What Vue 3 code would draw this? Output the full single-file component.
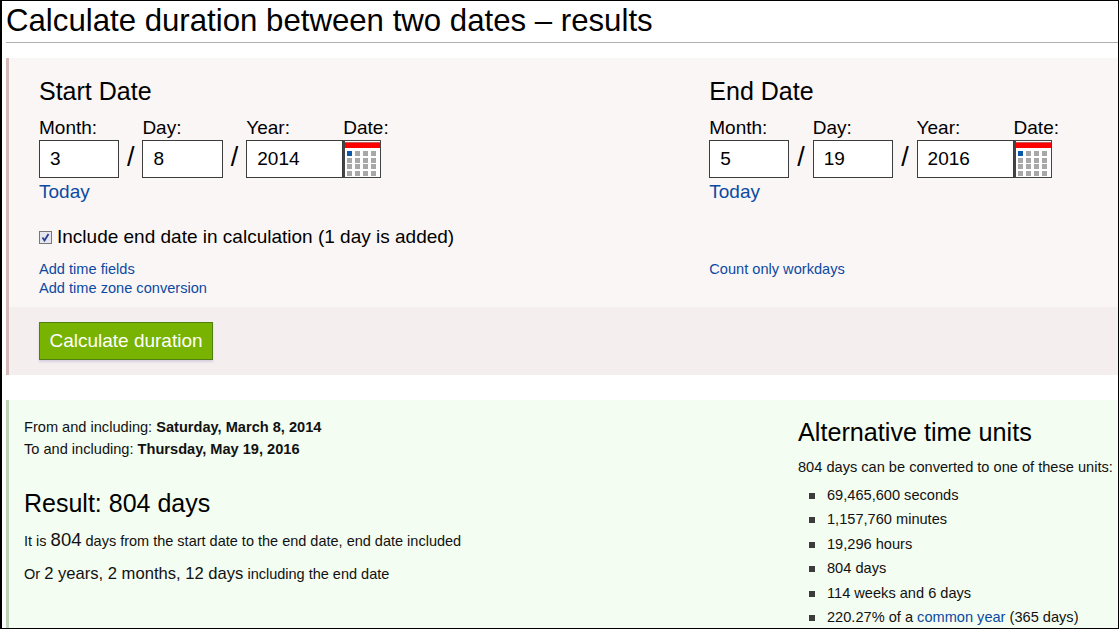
<script setup>
const panels = [
  { title: 'Start Date', month: '3', day: '8', year: '2014', showInclude: true, links: ['Add time fields', 'Add time zone conversion'] },
  { title: 'End Date', month: '5', day: '19', year: '2016', showInclude: false, links: ['Count only workdays'] },
]
const units = ['69,465,600 seconds', '1,157,760 minutes', '19,296 hours', '804 days', '114 weeks and 6 days']
const cells = Array.from({ length: 16 }, (_, i) => i)
</script>

<template>
  <div class="frame">
    <h1 class="title">Calculate duration between two dates – results</h1>
    <form class="form-panel" @submit.prevent>
      <div class="columns">
        <section v-for="p in panels" :key="p.title" class="col">
          <h2 class="date-title">{{ p.title }}</h2>
          <div class="fields">
            <label class="field f-month"><span>Month:</span><input class="box" :value="p.month" /></label>
            <span class="slash">/</span>
            <label class="field f-day"><span>Day:</span><input class="box" :value="p.day" /></label>
            <span class="slash">/</span>
            <label class="field f-year"><span>Year:</span><input class="box" :value="p.year" /></label>
            <div class="field f-date">
              <span>Date:</span>
              <div class="cal">
                <div class="cal-top"></div>
                <div class="cal-grid"><i v-for="c in cells" :key="c" :class="{ on: c === 0 }"></i></div>
              </div>
            </div>
          </div>
          <a class="today">Today</a>
          <label class="include" :class="{ hidden: !p.showInclude }">
            <span class="check">
              <svg width="9" height="9" viewBox="0 0 9 9"><path d="M1.5 4.5 L3.5 7.5 L7.5 1" fill="none" stroke="#2a3f8f" stroke-width="1.8"/></svg>
            </span>
            Include end date in calculation (1 day is added)
          </label>
          <div class="small-links"><a v-for="l in p.links" :key="l">{{ l }}</a></div>
        </section>
      </div>
      <div class="footer"><button class="go">Calculate duration</button></div>
    </form>
    <div class="results">
      <div class="res-left">
        <p class="range">From and including: <b>Saturday, March 8, 2014</b></p>
        <p class="range">To and including: <b>Thursday, May 19, 2016</b></p>
        <h2 class="result-title">Result: 804 days</h2>
        <p class="line l1">It is <span class="big">804</span> days from the start date to the end date, end date included</p>
        <p class="line l2">Or <span class="mid">2 years, 2 months, 12 days</span> including the end date</p>
      </div>
      <div class="res-right">
        <h2 class="alt-title">Alternative time units</h2>
        <p class="alt-sub">804 days can be converted to one of these units:</p>
        <ul class="units">
          <li v-for="u in units" :key="u">{{ u }}</li>
          <li>220.27% of a <a>common year</a> (365 days)</li>
        </ul>
      </div>
    </div>
  </div>
</template>

<style scoped>
.frame {
  width: 1119px; height: 629px; box-sizing: border-box;
  border: 1px solid #000; border-left-width: 2px; overflow: hidden; background: #fff;
  font-family: "Liberation Sans", Arial, sans-serif; color: #000; padding: 0 0 0 4px;
}
a { color: #0b4aa2; }
.title { margin: 0; font-size: 31.2px; font-weight: 400; line-height: 40px; height: 41px; border-bottom: 1px solid #b0b0b0; white-space: nowrap; }
.form-panel { margin-top: 15px; border-left: 3px solid #d4b9b9; background: #fbf6f6; height: 317px; display: flex; flex-direction: column; box-sizing: border-box; }
.columns { display: flex; flex: 1; padding: 0 0 0 30px; }
.col { width: 670.3px; flex: none; }
.date-title { margin: 19px 0 0; font-size: 25px; font-weight: 400; line-height: 28px; }
.fields { display: flex; align-items: flex-end; margin-top: 13px; }
.field { display: flex; flex-direction: column; font-size: 19px; line-height: 20px; }
.field > span { height: 22px; }
.box { box-sizing: border-box; height: 38px; border: 1px solid #3c3c3c; background: #fff; font: 19px "Liberation Sans", Arial, sans-serif; padding: 0 0 0 10px; color: #000; outline: none; border-radius: 0; }
.f-month .box { width: 80px; }
.f-day .box { width: 80.5px; }
.f-year .box { width: 97px; }
.slash { width: 23.4px; text-align: center; font-size: 27px; line-height: 36px; padding-bottom: 3px; flex: none; }
.cal { box-sizing: border-box; width: 38px; height: 38px; border: 1px solid #444; border-left-width: 2px; background: #fff; }
.cal-top { height: 6px; margin-top: 1px; background: #f00; border-top: 1px solid #c55; box-sizing: border-box; }
.cal-grid { display: grid; grid-template-columns: repeat(4, 5px); gap: 1.5px 3px; padding: 3px 0 0 2px; }
.cal-grid i { height: 5px; width: 5px; background: #a8a8a8; }
.cal-grid i.on { background: #0b57a8; }
.today { display: block; font-size: 19px; line-height: 21px; margin-top: 3px; }
.include { display: flex; align-items: center; gap: 5px; font-size: 19px; line-height: 22px; margin-top: 24px; height: 22px; }
.hidden { visibility: hidden; }
.check { box-sizing: border-box; width: 13px; height: 13px; border: 1px solid #777; background: #e6e6ee; display: flex; align-items: center; justify-content: center; }
.small-links { margin-top: 12px; display: flex; flex-direction: column; }
.small-links a { font-size: 14.6px; line-height: 19px; }
.footer { height: 68px; box-sizing: border-box; background: #f4eeee; padding: 15px 0 0 30px; flex: none; }
.go { box-sizing: border-box; width: 174px; height: 38px; background: #77b300; border: 1px solid #4f7f10; box-shadow: 0 2px 2px #d8cfe0; color: #fff; font: 19px "Liberation Sans", Arial, sans-serif; padding: 0; }
.results { margin-top: 25px; border-left: 3px solid #bfd3b9; background: #f4fdf1; height: 300px; display: flex; box-sizing: border-box; padding-left: 15px; }
.res-left { width: 774px; flex: none; }
.range { margin: 0; font-size: 14.6px; line-height: 22px; color: #111; }
.range:first-child { margin-top: 16px; }
.result-title { margin: 28px 0 0; font-size: 25px; font-weight: 400; line-height: 30px; }
.line { margin: 0; font-size: 14.5px; color: #111; }
.l1 { margin-top: 10px; line-height: 24px; }
.l2 { margin-top: 9px; line-height: 24px; font-size: 14.5px; }
.big { font-size: 18.5px; }
.mid { font-size: 16.6px; }
.alt-title { margin: 17px 0 0; font-size: 25.2px; font-weight: 400; line-height: 30px; }
.alt-sub { margin: 10px 0 0; font-size: 14.6px; line-height: 20px; color: #111; white-space: nowrap; }
.units { margin: 6px 0 0; padding: 0 0 0 29px; list-style: none; font-size: 14.6px; line-height: 24.4px; color: #111; }
.units li { white-space: nowrap; position: relative; }
.units li::before { content: ""; position: absolute; left: -18px; top: 10px; width: 6px; height: 6px; background: #3c3c3c; }
</style>
